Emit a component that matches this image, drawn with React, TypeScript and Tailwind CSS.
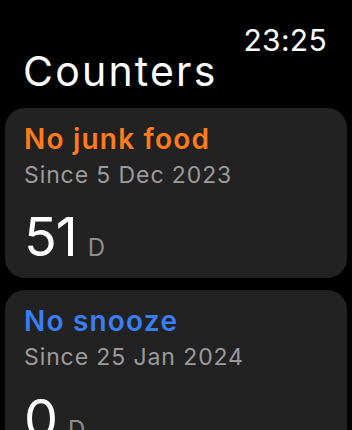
const counters = [
  { title: "No junk food", since: "Since 5 Dec 2023", days: 51, color: "text-[#ff7b1c]" },
  { title: "No snooze", since: "Since 25 Jan 2024", days: 0, color: "text-[#3a7ef4]" },
];

function CounterCard({ title, since, days, color }: (typeof counters)[number]) {
  return (
    <div className="flex h-[170px] shrink-0 flex-col rounded-[20px] bg-[#222222] px-[19px] pt-[14px]">
      <div className={`text-[28px] font-semibold leading-[34px] tracking-[1.2px] ${color}`}>{title}</div>
      <div className="mt-[4px] text-[23px] leading-[30px] tracking-[0.9px] text-[#9b9b9b]">{since}</div>
      <div className="mt-[17px] flex items-baseline gap-[11px]">
        <span className="text-[54px] font-normal leading-[60px] tracking-[-1px] text-white">{days}</span>
        <span className="text-[24px] leading-[30px] text-[#8e8e8e]">D</span>
      </div>
    </div>
  );
}

export default function App() {
  return (
    <div className="h-[430px] w-[352px] overflow-hidden bg-black font-['Inter',sans-serif]">
      <div className="flex justify-end pr-[25px] pt-[22px]">
        <span className="text-[30px] leading-[36px] tracking-[0.3px] text-white">23:25</span>
      </div>
      <div className="-mt-[12px] pl-[23px] text-[41px] leading-[50px] tracking-[2.2px] text-white">Counters</div>
      <div className="mt-[12px] flex flex-col gap-[12px] px-[5px]">
        {counters.map((c) => (
          <CounterCard key={c.title} {...c} />
        ))}
      </div>
    </div>
  );
}
